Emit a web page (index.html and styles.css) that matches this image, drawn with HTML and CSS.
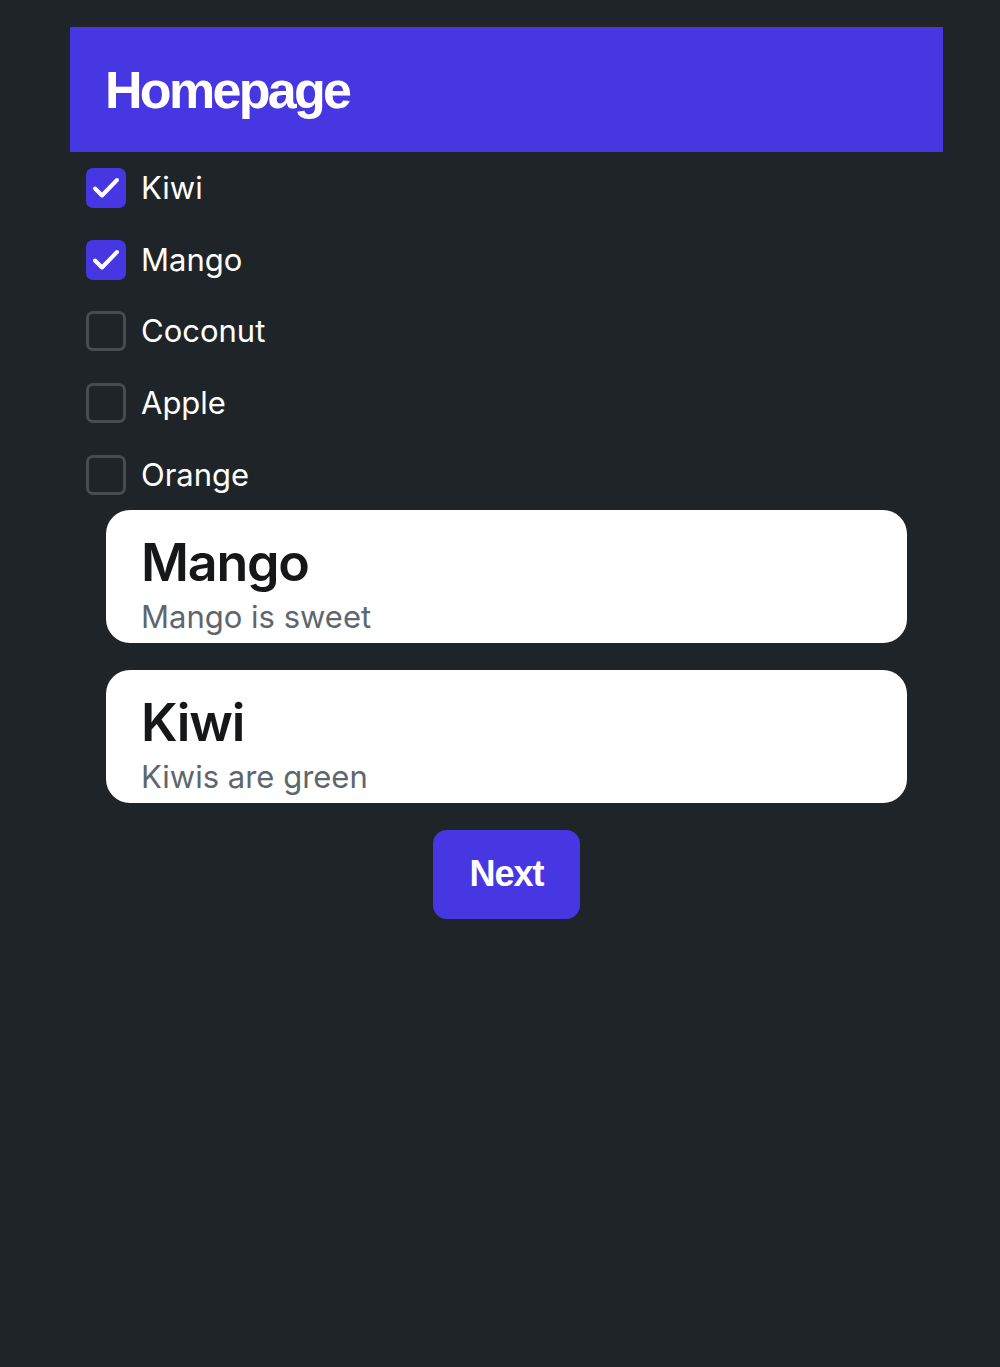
FILE: index.html
```html
<!DOCTYPE html>
<html lang="en">
<head>
    <meta charset="UTF-8">
    <meta name="viewport" content="width=device-width, initial-scale=1.0">
    <title>Homepage</title>
    <link rel="stylesheet" href="styles.css">
</head>
<body>
    <div class="container">
        <header class="header">
            <h1>Homepage</h1>
        </header>

        <ul class="fruit-list">
            <li class="fruit">
                <span class="box checked">
                    <svg viewBox="0 0 40 40"><path d="M9 20.5l7 7L31 12"/></svg>
                </span>
                <span class="fruit-name">Kiwi</span>
            </li>
            <li class="fruit">
                <span class="box checked">
                    <svg viewBox="0 0 40 40"><path d="M9 20.5l7 7L31 12"/></svg>
                </span>
                <span class="fruit-name">Mango</span>
            </li>
            <li class="fruit">
                <span class="box"></span>
                <span class="fruit-name">Coconut</span>
            </li>
            <li class="fruit">
                <span class="box"></span>
                <span class="fruit-name">Apple</span>
            </li>
            <li class="fruit">
                <span class="box"></span>
                <span class="fruit-name">Orange</span>
            </li>
        </ul>

        <div class="cards">
            <div class="card">
                <h2 class="card-title">Mango</h2>
                <p class="card-text">Mango is sweet</p>
            </div>
            <div class="card">
                <h2 class="card-title">Kiwi</h2>
                <p class="card-text">Kiwis are green</p>
            </div>
        </div>

        <div class="actions">
            <button class="next-btn">Next</button>
        </div>
    </div>
</body>
</html>
```

FILE: styles.css
```css
body {
    margin: 0;
    background-color: #1f2428;
    font-family: Inter, "Liberation Sans", sans-serif;
    color: #ffffff;
}
.container {
    width: 873px;
    margin: 27px 0 0 70px;
}
.header {
    height: 125px;
    background-color: #4737e3;
    display: flex;
    align-items: center;
    padding-left: 35px;
}
.header h1 {
    margin: 0;
    font-family: "Liberation Sans", Arial, sans-serif;
    font-size: 52px;
    font-weight: bold;
    letter-spacing: -2.7px;
}
.fruit-list {
    list-style: none;
    margin: 16px 0 0;
    padding: 0 0 0 16px;
    display: flex;
    flex-direction: column;
    gap: 31.7px;
}
.fruit {
    display: flex;
    align-items: center;
    gap: 15px;
    height: 40px;
}
.box {
    width: 40px;
    height: 40px;
    box-sizing: border-box;
    border: 3px solid #474c51;
    border-radius: 7px;
    display: flex;
}
.box.checked {
    background-color: #4737e3;
    border-color: #4737e3;
}
.box svg {
    width: 40px;
    height: 40px;
    margin: -3px;
    fill: none;
    stroke: #ffffff;
    stroke-width: 4;
    stroke-linecap: round;
    stroke-linejoin: round;
}
.fruit-name {
    font-size: 31px;
    line-height: 40px;
}
.cards {
    margin: 15px 36px 0;
    display: flex;
    flex-direction: column;
    gap: 27px;
}
.card {
    background-color: #ffffff;
    border-radius: 24px;
    height: 133px;
    box-sizing: border-box;
    padding: 22px 35px 0;
}
.card-title {
    margin: 0;
    font-size: 52px;
    font-weight: 600;
    line-height: 62px;
    color: #151719;
    letter-spacing: -1.2px;
}
.card-text {
    margin: 5px 0 0;
    font-size: 31px;
    line-height: 36px;
    color: #5d676d;
}
.actions {
    margin-top: 27px;
    display: flex;
    justify-content: center;
}
.next-btn {
    width: 147px;
    height: 89px;
    border: none;
    border-radius: 14px;
    background-color: #4737e3;
    color: #ffffff;
    font-family: "Liberation Sans", Arial, sans-serif;
    font-size: 36px;
    font-weight: bold;
    letter-spacing: -1px;
    cursor: pointer;
}
```
